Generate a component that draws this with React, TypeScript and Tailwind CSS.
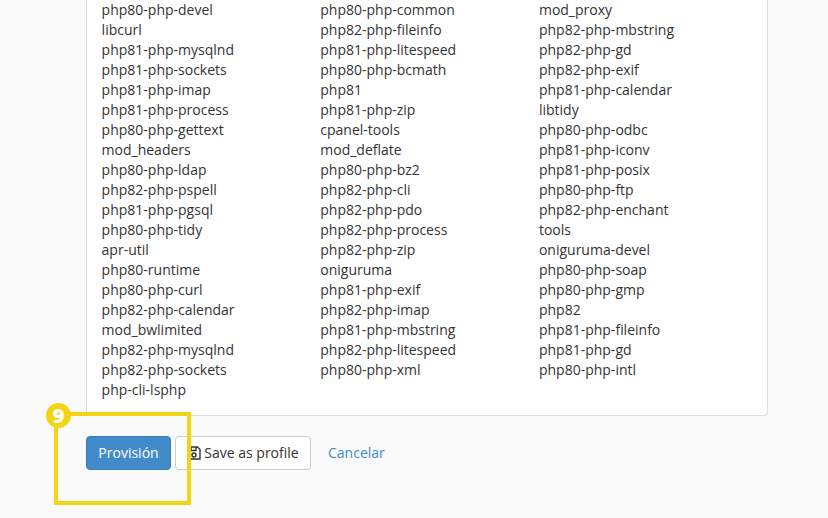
const columns = [
  ['php80-php-devel', 'libcurl', 'php81-php-mysqlnd', 'php81-php-sockets', 'php81-php-imap', 'php81-php-process', 'php80-php-gettext', 'mod_headers', 'php80-php-ldap', 'php82-php-pspell', 'php81-php-pgsql', 'php80-php-tidy', 'apr-util', 'php80-runtime', 'php80-php-curl', 'php82-php-calendar', 'mod_bwlimited', 'php82-php-mysqlnd', 'php82-php-sockets', 'php-cli-lsphp'],
  ['php80-php-common', 'php82-php-fileinfo', 'php81-php-litespeed', 'php80-php-bcmath', 'php81', 'php81-php-zip', 'cpanel-tools', 'mod_deflate', 'php80-php-bz2', 'php82-php-cli', 'php82-php-pdo', 'php82-php-process', 'php82-php-zip', 'oniguruma', 'php81-php-exif', 'php82-php-imap', 'php81-php-mbstring', 'php82-php-litespeed', 'php80-php-xml'],
  ['mod_proxy', 'php82-php-mbstring', 'php82-php-gd', 'php82-php-exif', 'php81-php-calendar', 'libtidy', 'php80-php-odbc', 'php81-php-iconv', 'php81-php-posix', 'php80-php-ftp', 'php82-php-enchant', 'tools', 'oniguruma-devel', 'php80-php-soap', 'php80-php-gmp', 'php82', 'php81-php-fileinfo', 'php81-php-gd', 'php80-php-intl'],
];

export default function App() {
  return (
    <div className="relative h-[518px] w-[828px] overflow-hidden bg-[#fafafa] pl-[86px] font-['Open_Sans',sans-serif] text-[14px] leading-[20px] text-[#333]">
      {/* Package list panel, top is scrolled off */}
      <div className="h-[416px] w-[682px] rounded-b-[4px] border-x border-b border-[#ddd] bg-white pl-[14.6px]">
        <div className="grid w-[656px] grid-cols-3">
          {columns.map((col, i) => (
            <ul key={i}>
              {col.map((name) => (
                <li key={name} className="h-5">{name}</li>
              ))}
            </ul>
          ))}
        </div>
      </div>

      {/* Actions */}
      <div className="mt-5 flex items-center">
        <button className="h-[34px] w-[85px] rounded-[4px] border border-[#357ebd] bg-[#428bca] text-white">Provisión</button>
        <button className="ml-1 flex h-[34px] w-[136px] items-center justify-center gap-[3px] rounded-[4px] border border-[#ccc] bg-white">
          <svg viewBox="0 0 14 14" className="h-[14px] w-[14px]" fill="none" stroke="#333" strokeWidth="1.4">
            <path d="M1 1h9.5L13 3.5V13H1z" />
            <path d="M4 1v3.5h5V1" />
            <circle cx="7" cy="9" r="2" />
          </svg>
          Save as profile
        </button>
        <span className="ml-[17px] text-[#428bca]">Cancelar</span>
      </div>

      {/* Tutorial highlight */}
      <div className="absolute left-[54px] top-[412px] h-[93px] w-[137px] border-4 border-[#f5d317]" />
      <div className="absolute left-[46px] top-[403px] flex h-[25px] w-[25px] items-center justify-center rounded-full bg-[#f5d317] text-[20px] font-extrabold text-white">9</div>
    </div>
  );
}
